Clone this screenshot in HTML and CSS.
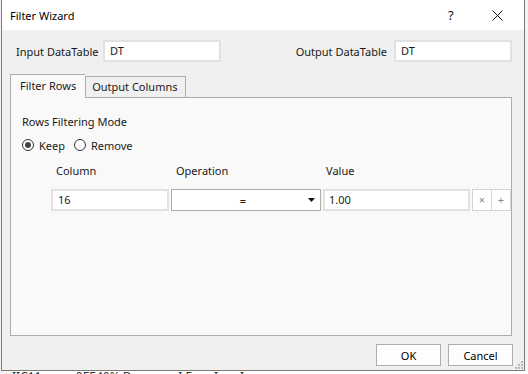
FILE: index.html
```html
<!DOCTYPE html>
<html lang="en">
<head>
  <meta charset="UTF-8" />
  <title>Filter Wizard</title>
  <link rel="stylesheet" href="styles.css">
</head>
<body>
  <div class="window">
    <div class="titlebar">
      <span class="title">Filter Wizard</span>
      <span class="help">?</span>
      <span class="close">
        <svg width="11" height="11" viewBox="0 0 11 11"><path d="M0.5 0.5 L10.5 10.5 M10.5 0.5 L0.5 10.5" stroke="#111" stroke-width="1" fill="none"/></svg>
      </span>
    </div>

    <div class="content">
      <div class="tables-row">
        <div class="field">
          <label class="field-label">Input DataTable</label>
          <div class="textbox wide">DT</div>
        </div>
        <div class="field">
          <label class="field-label right">Output DataTable</label>
          <div class="textbox wide">DT</div>
        </div>
      </div>

      <div class="tabs">
        <div class="tab active">Filter Rows</div>
        <div class="tab">Output Columns</div>
      </div>

      <div class="panel">
        <div class="mode-title">Rows Filtering Mode</div>
        <div class="radios">
          <span class="radio checked"></span><span class="radio-label">Keep</span>
          <span class="radio"></span><span class="radio-label">Remove</span>
        </div>

        <div class="grid-head">
          <span class="col-column">Column</span>
          <span class="col-op">Operation</span>
          <span class="col-value">Value</span>
        </div>
        <div class="grid-row">
          <div class="textbox cell-column">16</div>
          <div class="select cell-op">
            <span class="select-text">=</span>
            <svg width="7" height="4" viewBox="0 0 7 4"><path d="M0 0 H7 L3.5 4 Z" fill="#111"/></svg>
          </div>
          <div class="textbox cell-value">1.00</div>
          <div class="mini-btn">&times;</div>
          <div class="mini-btn">+</div>
        </div>
      </div>

      <div class="footer">
        <button class="btn">OK</button>
        <button class="btn">Cancel</button>
      </div>
    </div>

    <svg class="grip" width="10" height="10" viewBox="0 0 10 10">
      <rect x="8" y="2" width="2" height="2" fill="#b8b8b8"/>
      <rect x="5" y="5" width="2" height="2" fill="#b8b8b8"/>
      <rect x="8" y="5" width="2" height="2" fill="#b8b8b8"/>
      <rect x="2" y="8" width="2" height="2" fill="#b8b8b8"/>
      <rect x="5" y="8" width="2" height="2" fill="#b8b8b8"/>
      <rect x="8" y="8" width="2" height="2" fill="#b8b8b8"/>
    </svg>
  </div>
  <div class="behind">IIC11 &nbsp; &nbsp; &nbsp; &nbsp; &nbsp; 0EE40% D &nbsp; &nbsp; &nbsp; &nbsp; &nbsp; &nbsp; &nbsp; I E &nbsp; &nbsp; &nbsp; I &nbsp; &nbsp; &nbsp; I</div>
</body>
</html>
```

FILE: styles.css
```css
body { margin: 0; padding: 0; background: #f4f4f4; font-family: "Noto Sans", "Segoe UI", sans-serif; font-size: 11px; color: #1a1a1a; width: 528px; height: 374px; overflow: hidden; white-space: nowrap; }

.window { position: relative; margin-left: 1px; width: 524px; height: 371px; border: 1px solid #7a7a7a; border-top: none; background: #f0f0f0; box-sizing: border-box; display: flex; flex-direction: column; }

.titlebar { height: 30px; background: #fff; display: flex; align-items: center; flex-shrink: 0; }
.title { margin-left: 8px; flex: 1; color: #000; }
.help { width: 14px; margin-right: 30px; font-size: 13px; color: #111; }
.close { width: 11px; height: 11px; margin-right: 21px; display: flex; }

.content { flex: 1; display: flex; flex-direction: column; }

.tables-row { display: flex; justify-content: space-between; padding: 10px 12px 0 14px; height: 22px; }
.field { display: flex; align-items: center; }
.field-label { width: 87px; }
.field-label.right { width: auto; margin-right: 7px; }

.textbox { height: 22px; box-sizing: border-box; border: 2px solid #e1e1e1; background: #fff; padding-left: 5px; line-height: 18px; }
.textbox.wide { width: 118px; }

.tabs { display: flex; align-items: flex-end; margin: 12px 0 0 8px; height: 23px; position: relative; z-index: 1; }
.tab { height: 21px; box-sizing: border-box; border: 1px solid #acacac; border-bottom: none; background: #f0f0f0; padding: 0 7px 0 6px; line-height: 20px; }
.tab.active { height: 24px; margin-bottom: -1px; background: #f9f9f9; padding: 0 9px 0 9px; border-right: none; line-height: 22px; }

.panel { margin: 0 12px 0 8px; height: 239px; flex-shrink: 0; box-sizing: border-box; border: 1px solid #acacac; background: #f9f9f9; padding: 0 0 0 11px; }

.mode-title { margin-top: 16px; height: 16px; line-height: 16px; }
.radios { display: flex; align-items: center; margin-top: 8px; height: 14px; }
.radio { width: 10px; height: 10px; border: 1px solid #333; border-radius: 50%; box-sizing: content-box; background: #fff; position: relative; }
.radio.checked::after { content: ""; position: absolute; left: 2px; top: 2px; width: 6px; height: 6px; border-radius: 50%; background: #444; }
.radio-label { margin: 0 9px 0 5px; }

.grid-head { display: flex; margin-top: 11px; height: 16px; line-height: 16px; }
.col-column { margin-left: 34px; width: 120px; }
.col-op { width: 150px; }

.grid-row { display: flex; margin-top: 10px; margin-left: 29px; }
.cell-column { width: 118px; }
.select { width: 150px; height: 22px; box-sizing: border-box; margin-left: 2px; border: 1px solid #acacac; background: #fff; display: flex; align-items: center; padding-right: 5px; }
.select-text { flex: 1; text-align: center; padding-left: 6px; }
.cell-value { width: 147px; margin-left: 2px; padding-left: 4px; }
.mini-btn { width: 20px; height: 22px; box-sizing: border-box; border: 1px solid #d4d4d4; background: #fff; color: #888; font-size: 11px; text-align: center; line-height: 19px; margin-left: 2px; }
.mini-btn + .mini-btn { margin-left: -1px; }

.footer { display: flex; justify-content: flex-end; padding: 8px 11px 0 0; }
.btn { width: 65px; height: 22px; box-sizing: border-box; border: 1px solid #adadad; background: #fdfdfd; font-family: inherit; font-size: 11px; color: #000; margin-left: 7px; padding: 0; }

.grip { position: absolute; right: 1px; bottom: 1px; }

.behind { height: 3px; overflow: hidden; background: #fff; margin-left: 12px; line-height: 12px; font-size: 12px; white-space: nowrap; color: #333; padding-top: 0; }
```
